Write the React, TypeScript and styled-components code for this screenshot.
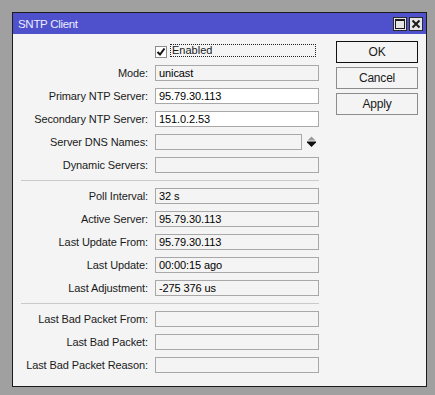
import React from "react";
import styled, { createGlobalStyle } from "styled-components";

const GlobalStyle = createGlobalStyle`
  html, body {
    margin: 0;
    padding: 0;
    background: #a0a0a0;
  }
  body {
    font-family: "Liberation Sans", Arial, sans-serif;
  }
`;

type Field = {
  label: string;
  value?: string;
};

const statusFields: Field[] = [
  { label: "Poll Interval:", value: "32 s" },
  { label: "Active Server:", value: "95.79.30.113" },
  { label: "Last Update From:", value: "95.79.30.113" },
  { label: "Last Update:", value: "00:00:15 ago" },
  { label: "Last Adjustment:", value: "-275 376 us" },
];

const badFields: Field[] = [
  { label: "Last Bad Packet From:" },
  { label: "Last Bad Packet:" },
  { label: "Last Bad Packet Reason:" },
];

const App: React.FC = () => {
  return (
    <>
      <GlobalStyle />
      <Desktop>
        <Window>
          <TitleBar>
            <Title>SNTP Client</Title>
            <TitleButtons>
              <TitleButton>
                <svg width="10" height="10" viewBox="0 0 10 10">
                  <rect x="0.5" y="0.5" width="9" height="9" fill="none" stroke="#1a1a1a" />
                  <rect x="0" y="0" width="10" height="2" fill="#1a1a1a" />
                </svg>
              </TitleButton>
              <TitleButton>
                <svg width="10" height="10" viewBox="0 0 10 10">
                  <path d="M1.5 1.5 L8.5 8.5 M8.5 1.5 L1.5 8.5" stroke="#1a1a1a" strokeWidth="2" />
                </svg>
              </TitleButton>
            </TitleButtons>
          </TitleBar>
          <Content>
            <Form>
              <Section>
                <Row>
                  <span />
                  <CheckWrap>
                    <CheckBox>
                      <svg width="10" height="10" viewBox="0 0 10 10">
                        <path d="M1.5 5 L4 7.5 L8.5 1.5" fill="none" stroke="#111" strokeWidth="2" />
                      </svg>
                    </CheckBox>
                    <FocusLabel>Enabled</FocusLabel>
                  </CheckWrap>
                </Row>
                <Row>
                  <Label>Mode:</Label>
                  <Input>unicast</Input>
                </Row>
                <Row>
                  <Label>Primary NTP Server:</Label>
                  <Input $editable>95.79.30.113</Input>
                </Row>
                <Row>
                  <Label>Secondary NTP Server:</Label>
                  <Input $editable>151.0.2.53</Input>
                </Row>
                <Row>
                  <Label>Server DNS Names:</Label>
                  <FieldWithIcon>
                    <Input $width={147} />
                    <svg width="9" height="12" viewBox="0 0 9 12">
                      <path d="M4.5 0.5 L8.5 4.5 L0.5 4.5 Z" fill="#9a9a9a" />
                      <rect x="0" y="5.5" width="9" height="1.5" fill="#111" />
                      <path d="M0.5 7 L8.5 7 L4.5 11 Z" fill="#111" />
                    </svg>
                  </FieldWithIcon>
                </Row>
                <Row>
                  <Label>Dynamic Servers:</Label>
                  <Input />
                </Row>
              </Section>
              <Divider />
              <Section>
                {statusFields.map((f) => (
                  <Row key={f.label}>
                    <Label>{f.label}</Label>
                    <Input>{f.value}</Input>
                  </Row>
                ))}
              </Section>
              <Divider />
              <Section>
                {badFields.map((f) => (
                  <Row key={f.label}>
                    <Label>{f.label}</Label>
                    <Input />
                  </Row>
                ))}
              </Section>
            </Form>
            <Buttons>
              <Button $primary>OK</Button>
              <Button>Cancel</Button>
              <Button>Apply</Button>
            </Buttons>
          </Content>
        </Window>
      </Desktop>
    </>
  );
};

export default App;

const Desktop = styled.div`
  width: 435px;
  height: 395px;
  padding: 12px 0 0 12px;
  box-sizing: border-box;
`;

const Window = styled.div`
  width: 415px;
  height: 375px;
  box-sizing: border-box;
  border: 1px solid #1c1c1c;
  background: #f4f4f4;
  display: flex;
  flex-direction: column;
`;

const TitleBar = styled.div`
  height: 21px;
  background: #4f50cc;
  display: flex;
  align-items: center;
  justify-content: space-between;
  padding: 0 3px 0 5px;
`;

const Title = styled.div`
  color: #ececff;
  font-size: 11.5px;
  letter-spacing: -0.3px;
`;

const TitleButtons = styled.div`
  display: flex;
  gap: 2px;
`;

const TitleButton = styled.div`
  width: 14px;
  height: 14px;
  box-sizing: border-box;
  border: 1px solid #2a2a2a;
  background: #e6e6e6;
  display: flex;
  align-items: center;
  justify-content: center;
`;

const Content = styled.div`
  display: flex;
  flex: 1;
`;

const Form = styled.div`
  width: 298px;
  padding: 8px 0 0 8px;
  display: flex;
  flex-direction: column;
`;

const Section = styled.div`
  display: flex;
  flex-direction: column;
  gap: 7px;
`;

const Row = styled.div`
  display: grid;
  grid-template-columns: 127px 164px;
  column-gap: 7px;
  height: 16px;
  align-items: center;
`;

const Label = styled.div`
  text-align: right;
  font-size: 11px;
  letter-spacing: -0.1px;
  color: #1a1a1a;
  white-space: nowrap;
`;

const Input = styled.div<{ $editable?: boolean; $width?: number }>`
  width: ${(p) => (p.$width ? `${p.$width}px` : "100%")};
  height: 16px;
  box-sizing: border-box;
  border: 1px solid #a8a8a8;
  background: ${(p) => (p.$editable ? "#ffffff" : "#f4f4f4")};
  padding-left: 3px;
  font-size: 11px;
  line-height: 14px;
  letter-spacing: -0.1px;
  color: #000;
  white-space: nowrap;
  overflow: hidden;
`;

const FieldWithIcon = styled.div`
  display: flex;
  align-items: center;
  gap: 5px;
`;

const CheckWrap = styled.div`
  display: flex;
  align-items: center;
  gap: 3px;
`;

const CheckBox = styled.div`
  width: 12px;
  height: 12px;
  margin-top: 4px;
  box-sizing: border-box;
  border: 1px solid #8c8c8c;
  background: #fff;
  display: flex;
  align-items: center;
  justify-content: center;
`;

const FocusLabel = styled.div`
  width: 146px;
  height: 13px;
  box-sizing: border-box;
  border: 1px dotted #222;
  padding-left: 1px;
  font-size: 11px;
  line-height: 13px;
  color: #1a1a1a;
  display: flex;
  align-items: center;
`;

const Divider = styled.div`
  height: 1px;
  background: #cacaca;
  margin: 7px 0;
`;

const Buttons = styled.div`
  margin-left: 17px;
  padding-top: 7px;
  display: flex;
  flex-direction: column;
  gap: 4px;
`;

const Button = styled.div<{ $primary?: boolean }>`
  width: 82px;
  height: 22px;
  box-sizing: border-box;
  border: 1px solid ${(p) => (p.$primary ? "#111" : "#8c8c8c")};
  background: #f4f4f4;
  display: flex;
  align-items: center;
  justify-content: center;
  font-size: 12px;
  letter-spacing: -0.2px;
  color: #1a1a1a;
`;
